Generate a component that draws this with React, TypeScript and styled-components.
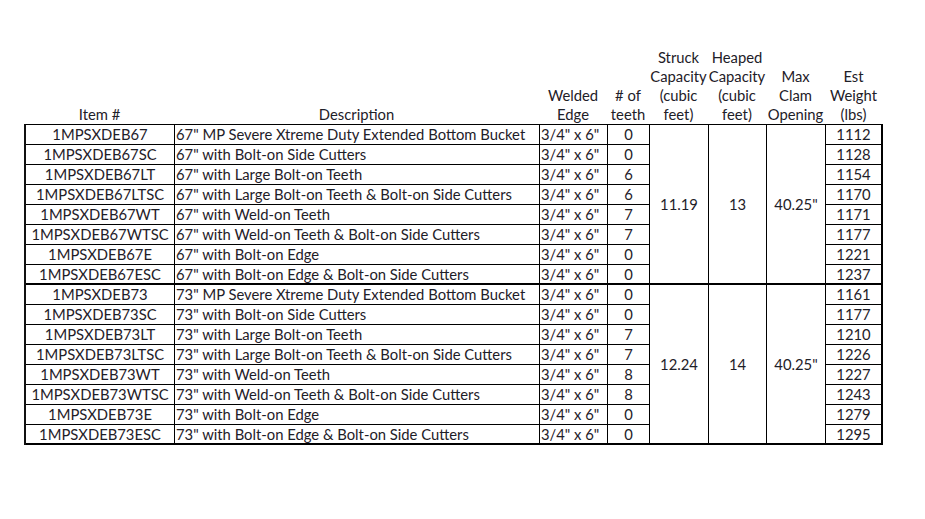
import React from "react";
import styled, { createGlobalStyle } from "styled-components";

const GlobalStyle = createGlobalStyle`
  html, body {
    margin: 0;
    padding: 0;
    background: #fff;
  }
  body {
    font-family: Lato, "Open Sans", "Liberation Sans", sans-serif;
    color: #1e2028;
  }
`;

const COLS = "149px 365px 68px 42px 59px 58px 59px 57px";

type Row = { item: string; desc: string; teeth: number; weight: number };

const groups: { struck: string; heaped: string; clam: string; rows: Row[] }[] = [
  {
    struck: "11.19",
    heaped: "13",
    clam: '40.25"',
    rows: [
      { item: "1MPSXDEB67", desc: '67" MP Severe Xtreme Duty Extended Bottom Bucket', teeth: 0, weight: 1112 },
      { item: "1MPSXDEB67SC", desc: '67" with Bolt-on Side Cutters', teeth: 0, weight: 1128 },
      { item: "1MPSXDEB67LT", desc: '67" with Large Bolt-on Teeth', teeth: 6, weight: 1154 },
      { item: "1MPSXDEB67LTSC", desc: '67" with Large Bolt-on Teeth & Bolt-on Side Cutters', teeth: 6, weight: 1170 },
      { item: "1MPSXDEB67WT", desc: '67" with Weld-on Teeth', teeth: 7, weight: 1171 },
      { item: "1MPSXDEB67WTSC", desc: '67" with Weld-on Teeth & Bolt-on Side Cutters', teeth: 7, weight: 1177 },
      { item: "1MPSXDEB67E", desc: '67" with Bolt-on Edge', teeth: 0, weight: 1221 },
      { item: "1MPSXDEB67ESC", desc: '67" with Bolt-on Edge & Bolt-on Side Cutters', teeth: 0, weight: 1237 },
    ],
  },
  {
    struck: "12.24",
    heaped: "14",
    clam: '40.25"',
    rows: [
      { item: "1MPSXDEB73", desc: '73" MP Severe Xtreme Duty Extended Bottom Bucket', teeth: 0, weight: 1161 },
      { item: "1MPSXDEB73SC", desc: '73" with Bolt-on Side Cutters', teeth: 0, weight: 1177 },
      { item: "1MPSXDEB73LT", desc: '73" with Large Bolt-on Teeth', teeth: 7, weight: 1210 },
      { item: "1MPSXDEB73LTSC", desc: '73" with Large Bolt-on Teeth & Bolt-on Side Cutters', teeth: 7, weight: 1226 },
      { item: "1MPSXDEB73WT", desc: '73" with Weld-on Teeth', teeth: 8, weight: 1227 },
      { item: "1MPSXDEB73WTSC", desc: '73" with Weld-on Teeth & Bolt-on Side Cutters', teeth: 8, weight: 1243 },
      { item: "1MPSXDEB73E", desc: '73" with Bolt-on Edge', teeth: 0, weight: 1279 },
      { item: "1MPSXDEB73ESC", desc: '73" with Bolt-on Edge & Bolt-on Side Cutters', teeth: 0, weight: 1295 },
    ],
  },
];

const headers: string[][] = [
  ["Item #"],
  ["Description"],
  ["Welded", "Edge"],
  ["# of", "teeth"],
  ["Struck", "Capacity", "(cubic", "feet)"],
  ["Heaped", "Capacity", "(cubic", "feet)"],
  ["Max", "Clam", "Opening"],
  ["Est", "Weight", "(lbs)"],
];

const Page = styled.div`
  padding: 48px 0 0 25px;
  font-size: 14.8px;
`;

const HeaderGrid = styled.div`
  display: grid;
  grid-template-columns: ${COLS};
  height: 76px;
`;

const HeadCell = styled.div`
  display: flex;
  flex-direction: column;
  justify-content: flex-end;
  align-items: center;
  line-height: 19px;
  span {
    white-space: nowrap;
  }
`;

const BodyGrid = styled.div`
  display: grid;
  grid-template-columns: ${COLS};
  grid-template-rows: repeat(16, 20px);
  width: max-content;
  border-top: 1px solid #000;
  border-left: 2px solid #111;
  margin-left: -1px;
`;

const Cell = styled.div<{ $row: number; $col: number; $span?: number; $align?: "left" | "center"; $sep?: boolean }>`
  grid-row: ${(p) => p.$row} / span ${(p) => p.$span ?? 1};
  grid-column: ${(p) => p.$col};
  box-sizing: border-box;
  border-right: 1px solid #000;
  border-bottom: ${(p) => (p.$sep ? "2px" : "1px")} solid #000;
  display: flex;
  align-items: center;
  justify-content: ${(p) => (p.$align === "left" ? "flex-start" : "center")};
  padding: 0 1px;
  white-space: nowrap;
  line-height: 19px;
`;

const WeightCell = styled(Cell)`
  border-right-width: 2px;
`;

export default function App() {
  return (
    <Page>
      <GlobalStyle />
      <HeaderGrid>
        {headers.map((lines, i) => (
          <HeadCell key={i}>
            {lines.map((l) => (
              <span key={l}>{l}</span>
            ))}
          </HeadCell>
        ))}
      </HeaderGrid>
      <BodyGrid>
        {groups.map((g, gi) => {
          const start = gi * 8 + 1;
          return (
            <React.Fragment key={gi}>
              {g.rows.map((r, ri) => {
                const row = start + ri;
                const sep = ri === 7;
                return (
                  <React.Fragment key={r.item}>
                    <Cell $row={row} $col={1} $sep={sep}>{r.item}</Cell>
                    <Cell $row={row} $col={2} $sep={sep} $align="left">{r.desc}</Cell>
                    <Cell $row={row} $col={3} $sep={sep} $align="left">3/4" x 6"</Cell>
                    <Cell $row={row} $col={4} $sep={sep}>{r.teeth}</Cell>
                    <WeightCell $row={row} $col={8} $sep={sep}>{r.weight}</WeightCell>
                  </React.Fragment>
                );
              })}
              <Cell $row={start} $col={5} $span={8} $sep>{g.struck}</Cell>
              <Cell $row={start} $col={6} $span={8} $sep>{g.heaped}</Cell>
              <Cell $row={start} $col={7} $span={8} $sep>{g.clam}</Cell>
            </React.Fragment>
          );
        })}
      </BodyGrid>
    </Page>
  );
}
